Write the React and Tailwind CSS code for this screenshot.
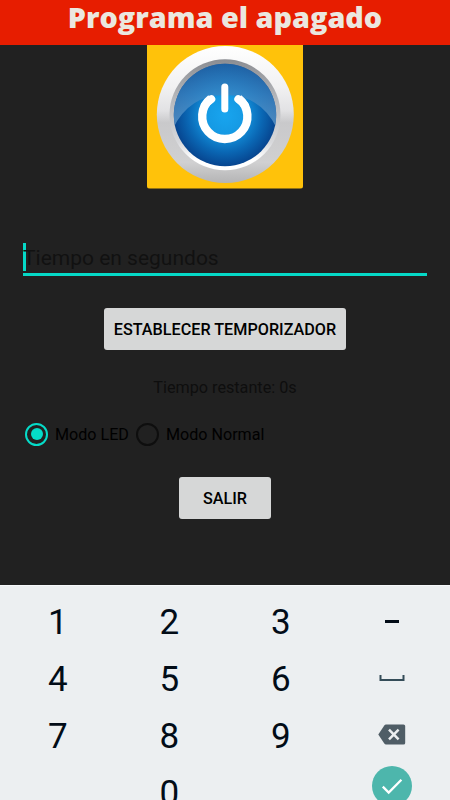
const keys = ["1", "2", "3", "minus", "4", "5", "6", "space", "7", "8", "9", "delete", "", "0", "", "done"];

function PowerImage() {
  return (
    <svg className="block w-[156px] h-[143.5px]" viewBox="0 0 156 143.5">
      <defs>
        <linearGradient id="ring" x1="0" y1="0" x2="0" y2="1">
          <stop offset="0" stopColor="#ffffff" />
          <stop offset="0.3" stopColor="#f1f1f2" />
          <stop offset="0.47" stopColor="#e2e2e4" />
          <stop offset="0.56" stopColor="#c9c9cb" />
          <stop offset="0.85" stopColor="#d0d0d1" />
          <stop offset="1" stopColor="#b4b4b5" />
        </linearGradient>
        <linearGradient id="bevel" x1="0" y1="0" x2="0" y2="1">
          <stop offset="0" stopColor="#8b8d92" />
          <stop offset="0.35" stopColor="#b5b7bb" />
          <stop offset="0.75" stopColor="#d8d9dc" />
          <stop offset="0.9" stopColor="#ffffff" />
        </linearGradient>
        <radialGradient id="blue" cx="0.5" cy="0.5" r="0.52">
          <stop offset="0" stopColor="#18a5ef" />
          <stop offset="0.35" stopColor="#159ae4" />
          <stop offset="0.7" stopColor="#0a67b4" />
          <stop offset="1" stopColor="#06408a" />
        </radialGradient>
        <linearGradient id="gloss" x1="0" y1="0" x2="0" y2="1">
          <stop offset="0.15" stopColor="#2a6fae" stopOpacity="0.6" />
          <stop offset="0.5" stopColor="#3d86c3" stopOpacity="0.75" />
          <stop offset="1" stopColor="#78a7cf" stopOpacity="0.8" />
        </linearGradient>
        <clipPath id="face">
          <circle cx="78" cy="70" r="51.2" />
        </clipPath>
      </defs>
      <rect width="156" height="143.5" fill="#ffc20a" />
      <circle cx="78.3" cy="69.5" r="68.5" fill="url(#ring)" />
      <circle cx="78" cy="69.8" r="55.5" fill="url(#bevel)" />
      <circle cx="78" cy="70" r="51.2" fill="url(#blue)" />
      <path d="M20 100 Q34 50 78 50 Q122 50 136 100 V0 H20Z" fill="url(#gloss)" clipPath="url(#face)" />
      <g fill="none" stroke="#fff" strokeLinecap="round">
        <path d="M63.9 53.6 A22.6 22.6 0 1 0 91.7 53.6" strokeWidth="8.4" strokeLinecap="butt" />
        <path d="M64.3 54.1 A22.6 22.6 0 0 0 58 60 M91.3 54.1 A22.6 22.6 0 0 1 97.6 60" strokeWidth="8" />
        <path d="M77.8 42 V64" strokeWidth="7" />
      </g>
    </svg>
  );
}

function KeyFace({ name }) {
  if (name === "minus") {
    return <div className="w-3.5 h-[3px] mb-0.5 bg-[#020c17]" />;
  }
  if (name === "space") {
    return (
      <svg className="w-[26px] h-2 mb-1" viewBox="0 0 26 8" fill="none" stroke="#344c58" strokeWidth="2">
        <path d="M1.5 1 V6 H24.5 V1" />
      </svg>
    );
  }
  if (name === "delete") {
    return (
      <svg className="w-7 h-[21px] mb-1" viewBox="0 0 28 21">
        <path d="M8 .4 H25.5 Q27.2 .4 27.2 2 V19 Q27.2 20.6 25.5 20.6 H8 Q7 20.6 6.3 19.6 L.3 10.5 L6.3 1.4 Q7 .4 8 .4Z" fill="#4f5d66" />
        <path d="M11 5.7 L20.6 15.3 M20.6 5.7 L11 15.3" stroke="#eceff1" strokeWidth="2.5" />
      </svg>
    );
  }
  if (name === "done") {
    return (
      <div className="w-10 h-10 shrink-0 -mt-4 rounded-full bg-[#4db6ac]">
        <svg className="w-10 h-10" viewBox="0 0 40 40" fill="none" stroke="#fff" strokeWidth="2.3">
          <path d="M10.8 20.6 L16.7 26.5 L29.4 13.8" />
        </svg>
      </div>
    );
  }
  return <span>{name}</span>;
}

export default function App() {
  return (
    <div className="w-[450px] h-[800px] overflow-hidden flex flex-col bg-[#212121] font-['Roboto',sans-serif]">
      {/* Title */}
      <header className="h-[45px] shrink-0 bg-[#e71d00] text-center">
        <h1 className="font-['Open_Sans',sans-serif] font-extrabold text-[28.8px] leading-[34px] text-[#ebe7df] whitespace-nowrap">
          Programa el apagado
        </h1>
      </header>

      {/* Timer form */}
      <main className="h-[540px] shrink-0 flex flex-col items-center">
        <div className="rounded-b-[3px] overflow-hidden">
          <PowerImage />
        </div>

        <div className="w-[404px] h-[33px] mt-[54.5px] border-b-[3px] border-[#05d9c7]">
          <div className="h-7 flex items-center border-l-[3px] border-[#05d9c7]">
            <span className="-ml-[3px] text-[21px] leading-7 pt-0.5 text-[#111111]">Tiempo en segundos</span>
          </div>
        </div>

        <button className="w-[242px] h-[42px] mt-8 pt-0.5 rounded-[3px] bg-[#d6d7d7] text-black text-[16.2px] font-medium whitespace-nowrap">
          ESTABLECER TEMPORIZADOR
        </button>

        <p className="mt-7 text-[16.2px] leading-5 text-[#0e0e0e]">Tiempo restante: 0s</p>

        <div className="w-full h-6 mt-6 pl-[25px] flex items-center text-[16.1px] text-black">
          <span className="w-[23px] h-[23px] rounded-full border-[2.5px] border-[#05dcc9] flex items-center justify-center">
            <span className="w-3 h-3 rounded-full bg-[#05dcc9]" />
          </span>
          <span className="w-[74px] ml-[7px] pt-0.5 whitespace-nowrap">Modo LED</span>
          <span className="w-[23px] h-[23px] ml-[7px] rounded-full border-2 border-[#0e0e0e]" />
          <span className="ml-[7px] pt-0.5">Modo Normal</span>
        </div>

        <button className="w-[92px] h-[42px] mt-[31px] pt-0.5 rounded-[3px] bg-[#d6d7d7] text-black text-[16.2px] font-medium">
          SALIR
        </button>
      </main>

      {/* Numeric keyboard */}
      <section className="h-[215px] shrink-0 overflow-hidden bg-[#eceff1] border-t border-[#f6f9fb] pl-0.5 pt-2">
        <div className="grid grid-cols-[repeat(4,111.5px)] auto-rows-[57px] text-[35px] leading-none text-[#020c17]">
          {keys.map((key, i) => (
            <div key={i} className="flex items-center justify-center">
              <KeyFace name={key} />
            </div>
          ))}
        </div>
      </section>
    </div>
  );
}
